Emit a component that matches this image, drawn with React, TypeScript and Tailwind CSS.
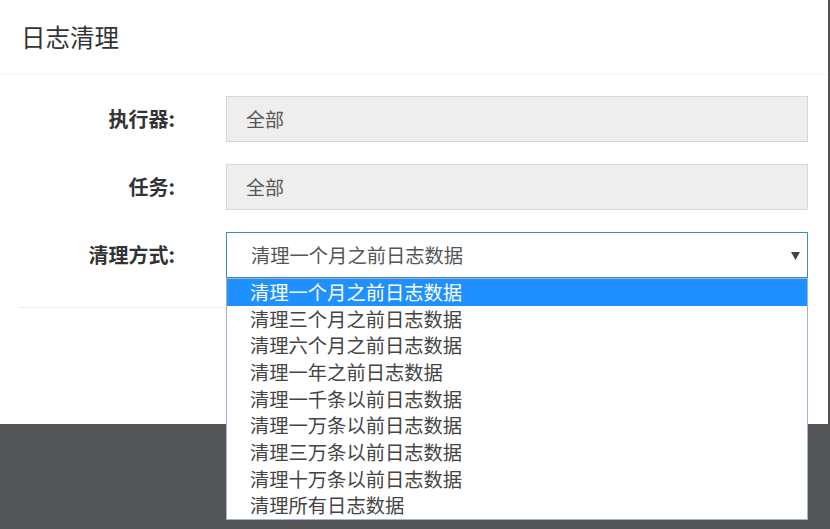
import React from "react";

const options = [
  "清理一个月之前日志数据",
  "清理三个月之前日志数据",
  "清理六个月之前日志数据",
  "清理一年之前日志数据",
  "清理一千条以前日志数据",
  "清理一万条以前日志数据",
  "清理三万条以前日志数据",
  "清理十万条以前日志数据",
  "清理所有日志数据",
];

function Row({ label, children }: { label: string; children: React.ReactNode }) {
  return (
    <div className="flex items-center h-[46px] mb-[22px]">
      <div className="w-[175px] text-right font-bold text-[20px] text-[#333]">{label}</div>
      <div className="ml-[51px] w-[582px] h-full relative">{children}</div>
    </div>
  );
}

export default function App() {
  const [selected] = React.useState(0);

  return (
    <div
      className="min-h-screen bg-[#535456]"
      style={{ fontFamily: '"Noto Sans CJK SC", "Noto Sans", sans-serif' }}
    >
      <div className="w-[828px] h-[424px] bg-white">
        <div className="h-[75px] border-b border-[#f4f4f4] px-[21px] flex items-center text-[24.5px] text-[#333]">
          日志清理
        </div>

        <div className="pt-[21px]">
          <Row label="执行器:">
            <div className="h-full bg-[#eeeeee] border border-[#d2d6de] flex items-center pl-[19px] text-[19px] text-[#555]">
              全部
            </div>
          </Row>
          <Row label="任务:">
            <div className="h-full bg-[#eeeeee] border border-[#d2d6de] flex items-center pl-[19px] text-[19px] text-[#555]">
              全部
            </div>
          </Row>
          <Row label="清理方式:">
            <div className="h-full bg-white border border-[#3c8dbc] flex items-center pl-[24px] text-[19.3px] text-[#555]">
              {options[selected]}
              <svg
                className="absolute right-[8px] top-[20px]"
                width="9"
                height="8"
                viewBox="0 0 9 8"
              >
                <path d="M0 0 L9 0 L4.5 8 Z" fill="#444" />
              </svg>
            </div>
            <div className="absolute top-full left-0 w-full z-10 bg-white border border-[#a3b3cc]">
              {options.map((opt, i) => (
                <div
                  key={opt}
                  className={
                    i === selected
                      ? "h-[26.7px] flex items-center pl-[23px] text-[19.3px] bg-[#1e90ff] text-white"
                      : "h-[26.7px] flex items-center pl-[23px] text-[19.3px] text-[#444]"
                  }
                >
                  {opt}
                </div>
              ))}
            </div>
          </Row>
        </div>

        <div className="mx-[18px] mt-[29px] border-t border-[#eeeeee]" />

        <div className="pl-[226px] pt-[30px] flex gap-2">
          <button className="h-[43px] w-[80px] bg-[#3c8dbc] border border-[#367fa9]" />
          <button className="h-[43px] w-[80px] bg-[#f4f4f4] border border-[#ddd]" />
        </div>
      </div>
    </div>
  );
}
